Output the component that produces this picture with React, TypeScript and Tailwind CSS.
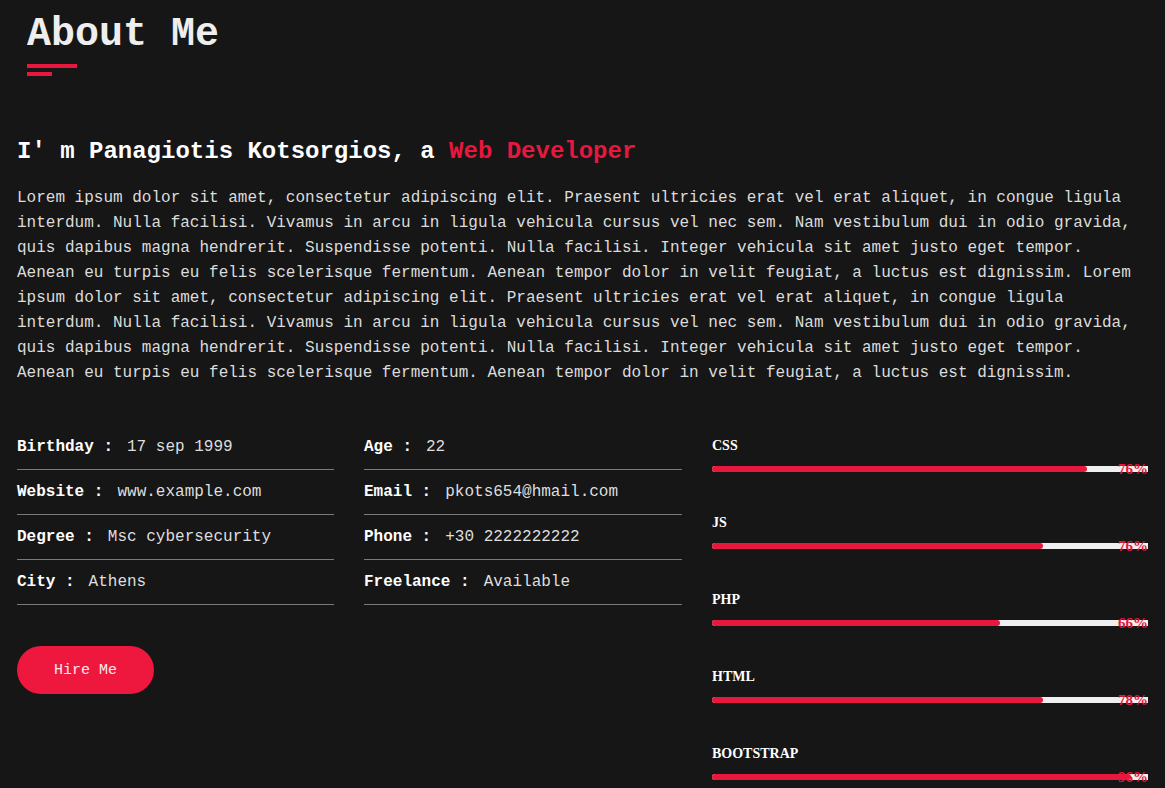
const info = [
  [
    { label: 'Birthday', value: '17 sep 1999' },
    { label: 'Website', value: 'www.example.com' },
    { label: 'Degree', value: 'Msc cybersecurity' },
    { label: 'City', value: 'Athens' },
  ],
  [
    { label: 'Age', value: '22' },
    { label: 'Email', value: 'pkots654@hmail.com' },
    { label: 'Phone', value: '+30 2222222222' },
    { label: 'Freelance', value: 'Available' },
  ],
]

const skills = [
  { name: 'CSS', fill: 86, label: '76%' },
  { name: 'JS', fill: 76, label: '76%' },
  { name: 'PHP', fill: 66, label: '66%' },
  { name: 'HTML', fill: 76, label: '78%' },
  { name: 'BOOTSTRAP', fill: 96, label: '96%' },
]

const lorem =
  'Lorem ipsum dolor sit amet, consectetur adipiscing elit. Praesent ultricies erat vel erat aliquet, in congue ligula interdum. Nulla facilisi. Vivamus in arcu in ligula vehicula cursus vel nec sem. Nam vestibulum dui in odio gravida, quis dapibus magna hendrerit. Suspendisse potenti. Nulla facilisi. Integer vehicula sit amet justo eget tempor. Aenean eu turpis eu felis scelerisque fermentum. Aenean tempor dolor in velit feugiat, a luctus est dignissim.'

export default function App() {
  return (
    <section className="min-h-[788px] bg-[#161616] px-[17px] pt-[11px] pb-10 font-['Liberation_Mono','Courier_New',monospace] text-[#dedede]">
      {/* Title */}
      <div className="pl-[10px]">
        <h2 className="text-[40px] font-bold leading-[48px] text-[#eeeeee]">About Me</h2>
        <div className="mt-[5px] flex flex-col gap-[4px]">
          <span className="block h-[4px] w-[50px] bg-[#e8173d]" />
          <span className="block h-[4px] w-[25px] bg-[#e8173d]" />
        </div>
      </div>

      <h3 className="mt-[60px] text-[24px] font-bold leading-[32px] text-white">
        I' m Panagiotis Kotsorgios, a <span className="text-[#e8173d]">Web Developer</span>
      </h3>

      <p className="mt-[18px] text-[16px] leading-[25px] text-[#dcdcdc]">
        {lorem} {lorem}
      </p>

      <div className="mt-[39px] grid grid-cols-[317px_318px_1fr] gap-x-[30px]">
        {info.map((col, i) => (
          <div key={i}>
            {col.map((row) => (
              <div key={row.label} className="flex border-b border-[#7a7a7a] py-[10px] text-[16px] leading-6">
                <strong className="font-bold text-white">{row.label} :</strong>
                <span className="ml-[14px] text-[#dedede]">{row.value}</span>
              </div>
            ))}
            {i === 0 && (
              <button className="mt-[41px] flex h-[48px] w-[137px] items-center justify-center rounded-full bg-[#ee183f] pt-[2px] text-[15px] text-[#fbe9ec]">
                Hire Me
              </button>
            )}
          </div>
        ))}

        {/* Skills */}
        <div className="flex flex-col gap-[41px] pt-[11px]">
          {skills.map((s) => (
            <div key={s.name}>
              <div className="font-['Liberation_Serif','Times_New_Roman',serif] text-[14px] font-bold leading-[20px] text-white">
                {s.name}
              </div>
              <div className="relative mt-[10px] h-[6px] rounded-l-full bg-[#efefef]">
                <div className="h-full rounded-full bg-[#e8173d]" style={{ width: `${s.fill}%` }} />
                <span className="absolute right-0 top-1/2 -translate-y-1/2 font-['Liberation_Serif','Times_New_Roman',serif] text-[15px] font-bold leading-none text-[#e8173d]">
                  {s.label}
                </span>
              </div>
            </div>
          ))}
        </div>
      </div>
    </section>
  )
}
